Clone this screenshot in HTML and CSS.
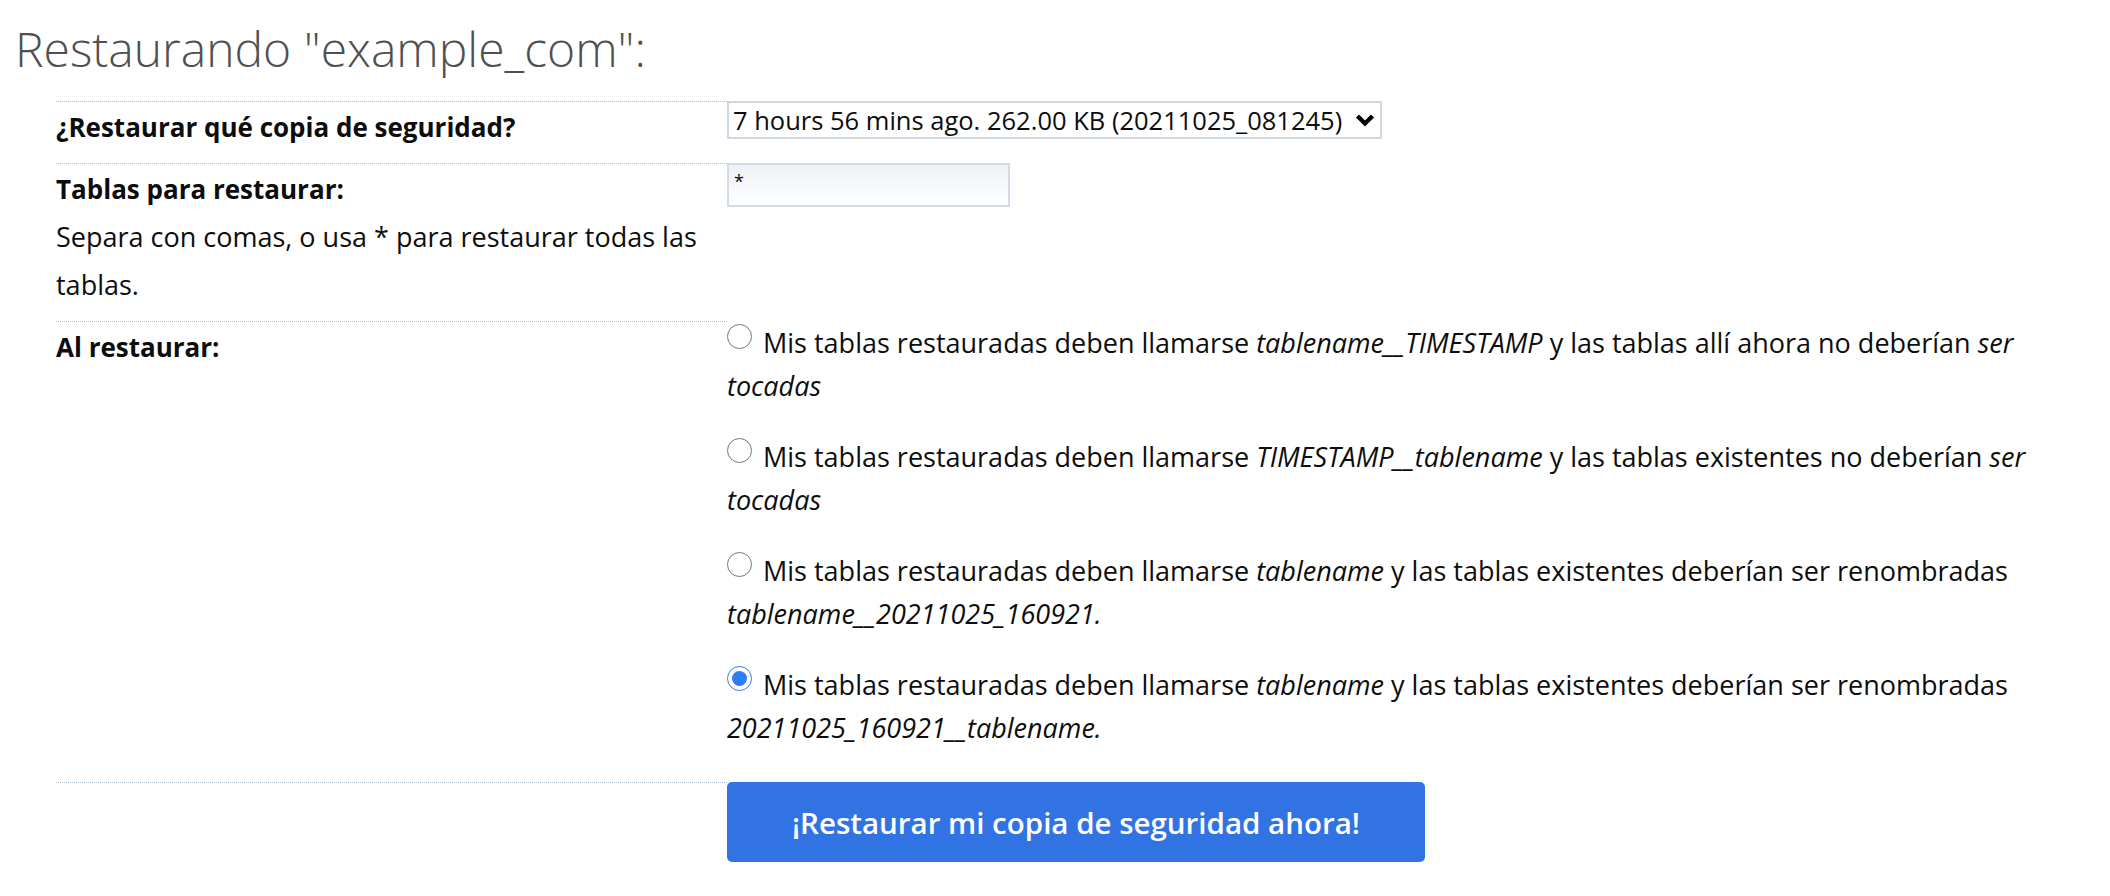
FILE: index.html
```html
<!DOCTYPE html>
<html lang="es">
<head>
  <meta charset="UTF-8"/>
  <meta name="viewport" content="width=device-width, initial-scale=1.0"/>
  <title>Restaurar copia de seguridad</title>
  <link rel="stylesheet" href="styles.css">
</head>
<body>

  <div class="page">
    <h2 class="title">Restaurando "example_com":</h2>

    <table class="restore-form">
      <tr>
        <th>¿Restaurar qué copia de seguridad?</th>
        <td>
          <span class="select-wrap">
            <select class="backup-select">
              <option>7 hours 56 mins ago. 262.00 KB (20211025_081245)</option>
            </select>
            <svg class="chevron" viewBox="0 0 20 14" width="20" height="14">
              <path d="M2.5 3 L10 10.5 L17.5 3" fill="none" stroke="#000" stroke-width="4.4"/>
            </svg>
          </span>
        </td>
      </tr>
      <tr>
        <th>
          Tablas para restaurar:
          <div class="hint">Separa con comas, o usa * para restaurar todas las tablas.</div>
        </th>
        <td>
          <input type="text" class="tables-input" value="*">
        </td>
      </tr>
      <tr>
        <th>Al restaurar:</th>
        <td>
          <div class="options">
            <label class="option">
              <input type="radio" name="mode"> Mis tablas restauradas deben llamarse <em>tablename__TIMESTAMP</em> y las tablas allí ahora no deberían <em>ser</em> <em>tocadas</em>
            </label>
            <label class="option">
              <input type="radio" name="mode"> Mis tablas restauradas deben llamarse <em>TIMESTAMP__tablename</em> y las tablas existentes no deberían <em>ser</em> <em>tocadas</em>
            </label>
            <label class="option">
              <input type="radio" name="mode"> Mis tablas restauradas deben llamarse <em>tablename</em> y las tablas existentes deberían ser renombradas <em>tablename__20211025_160921.</em>
            </label>
            <label class="option">
              <input type="radio" name="mode" checked> Mis tablas restauradas deben llamarse <em>tablename</em> y las tablas existentes deberían ser renombradas <em>20211025_160921__tablename.</em>
            </label>
          </div>
        </td>
      </tr>
      <tr>
        <th></th>
        <td>
          <button class="btn">¡Restaurar mi copia de seguridad ahora!</button>
        </td>
      </tr>
    </table>
  </div>

</body>
</html>
```

FILE: styles.css
```css
* {
  box-sizing: border-box;
}

body {
  margin: 0;
  background: #fff;
  color: #0d0d0d;
  font-family: "Open Sans", "Noto Sans", sans-serif;
}

.page {
  padding: 17px 16px 0 15px;
}

.title {
  margin: 0 0 20px;
  font-size: 48px;
  font-weight: 300;
  line-height: 64px;
  color: #505050;
}

.restore-form {
  margin-left: 41px;
  border-collapse: separate;
  border-spacing: 0;
}

.restore-form th {
  width: 671px;
  padding: 1px 0 12px;
  border-top: 1px dotted #afbfcf;
  text-align: left;
  vertical-align: top;
  font-size: 26px;
  font-weight: 700;
  line-height: 48px;
}

.restore-form td {
  padding: 0;
  vertical-align: top;
}

.hint {
  font-size: 27px;
  font-weight: 400;
}

/* backup select */
.select-wrap {
  position: relative;
  display: inline-block;
  vertical-align: top;
}

.backup-select {
  display: block;
  width: 655px;
  height: 38px;
  padding: 0 0 0 4px;
  border: 2px solid #cfd8e2;
  border-radius: 0;
  background: #fff;
  color: #0d0d0d;
  font-family: inherit;
  font-size: 25.5px;
  -webkit-appearance: none;
  appearance: none;
}

.chevron {
  position: absolute;
  right: 7px;
  top: 12px;
  pointer-events: none;
}

.tables-input {
  width: 283px;
  height: 44px;
  padding: 5px 5px 13px;
  border: 2px solid #d3dbe4;
  border-radius: 0;
  background: linear-gradient(#eef1f5, #fff);
  color: #0d0d0d;
  font-family: inherit;
  font-size: 18px;
  line-height: 22px;
  outline: none;
}

/* restore mode options */
.options {
  padding-bottom: 5px;
}

.option {
  display: block;
  margin-bottom: 28px;
  font-size: 27px;
  line-height: 43px;
}

.option input {
  width: 25px;
  height: 25px;
  margin: 3px 4px 0 0;
  vertical-align: top;
  accent-color: #2f7cf6;
}

.btn {
  height: 80px;
  padding: 0 65px;
  border: none;
  border-radius: 5px;
  background: #3273e3;
  color: #fff;
  font-family: inherit;
  font-size: 29.5px;
  font-weight: 600;
  cursor: pointer;
}
```
